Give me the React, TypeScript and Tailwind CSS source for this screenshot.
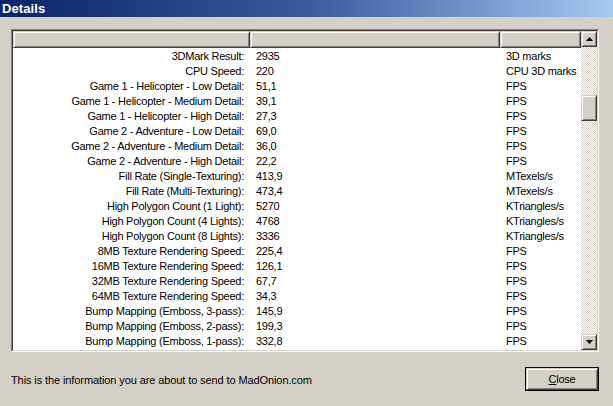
import React from 'react'

const rows: [string, string, string][] = [
  ['3DMark Result:', '2935', '3D marks'],
  ['CPU Speed:', '220', 'CPU 3D marks'],
  ['Game 1 - Helicopter - Low Detail:', '51,1', 'FPS'],
  ['Game 1 - Helicopter - Medium Detail:', '39,1', 'FPS'],
  ['Game 1 - Helicopter - High Detail:', '27,3', 'FPS'],
  ['Game 2 - Adventure - Low Detail:', '69,0', 'FPS'],
  ['Game 2 - Adventure - Medium Detail:', '36,0', 'FPS'],
  ['Game 2 - Adventure - High Detail:', '22,2', 'FPS'],
  ['Fill Rate (Single-Texturing):', '413,9', 'MTexels/s'],
  ['Fill Rate (Multi-Texturing):', '473,4', 'MTexels/s'],
  ['High Polygon Count (1 Light):', '5270', 'KTriangles/s'],
  ['High Polygon Count (4 Lights):', '4768', 'KTriangles/s'],
  ['High Polygon Count (8 Lights):', '3336', 'KTriangles/s'],
  ['8MB Texture Rendering Speed:', '225,4', 'FPS'],
  ['16MB Texture Rendering Speed:', '126,1', 'FPS'],
  ['32MB Texture Rendering Speed:', '67,7', 'FPS'],
  ['64MB Texture Rendering Speed:', '34,3', 'FPS'],
  ['Bump Mapping (Emboss, 3-pass):', '145,9', 'FPS'],
  ['Bump Mapping (Emboss, 2-pass):', '199,3', 'FPS'],
  ['Bump Mapping (Emboss, 1-pass):', '332,8', 'FPS'],
]

// classic raised 3d edge
const raised =
  'border border-t-[#d4d0c8] border-l-[#d4d0c8] border-r-[#404040] border-b-[#404040] shadow-[inset_1px_1px_#ffffff,inset_-1px_-1px_#808080]'

function Arrow({ up }: { up?: boolean }) {
  return (
    <svg width="7" height="4" viewBox="0 0 7 4">
      {up ? <path d="M3.5 0 L7 4 L0 4 Z" fill="#000" /> : <path d="M0 0 L7 0 L3.5 4 Z" fill="#000" />}
    </svg>
  )
}

function HeaderCell({ className }: { className: string }) {
  return <div className={`h-[17px] shrink-0 bg-[#d4d0c8] ${raised} ${className}`} />
}

export default function App() {
  return (
    <div className="w-[613px] h-[406px] bg-[#d4d0c8] flex flex-col overflow-hidden font-['Liberation_Sans',Arial,sans-serif] text-[11px] tracking-[-0.25px] text-black">
      {/* title bar */}
      <div className="h-[17px] shrink-0 flex items-center pl-[2px] bg-gradient-to-r from-[#0a246a] via-[#3a5a9c] to-[#a6caf0]">
        <span className="text-white font-bold text-[13px] leading-none tracking-[0.1px]">Details</span>
      </div>

      {/* list view */}
      <div className="mt-[12px] ml-[11px] mr-[14px] h-[323px] border border-t-[#808080] border-l-[#808080] border-r-white border-b-white">
        <div className="h-full flex border border-t-[#404040] border-l-[#404040] border-r-[#d4d0c8] border-b-[#d4d0c8] bg-white">
          <div className="flex-1 flex flex-col overflow-hidden">
            <div className="flex">
              <HeaderCell className="w-[237px]" />
              <HeaderCell className="w-[250px]" />
              <HeaderCell className="flex-1" />
            </div>
            <div className="flex flex-col pt-[1px]">
              {rows.map(([label, value, unit]) => (
                <div key={label} className="flex h-[15px] items-center leading-none shrink-0">
                  <div className="w-[237px] text-right pr-[6px] whitespace-nowrap">{label}</div>
                  <div className="w-[250px] pl-[6px]">{value}</div>
                  <div className="flex-1 pl-[6px] whitespace-nowrap">{unit}</div>
                </div>
              ))}
            </div>
          </div>

          {/* scrollbar */}
          <div className="w-[16px] shrink-0 flex flex-col bg-[repeating-conic-gradient(#ffffff_0_25%,#d4d0c8_0_50%)] bg-[length:2px_2px]">
            <div className={`h-[16px] shrink-0 bg-[#d4d0c8] flex items-center justify-center ${raised}`}>
              <Arrow up />
            </div>
            <div className="h-[48px] shrink-0" />
            <div className={`h-[26px] shrink-0 bg-[#d4d0c8] ${raised}`} />
            <div className="flex-1" />
            <div className={`h-[16px] shrink-0 bg-[#d4d0c8] flex items-center justify-center ${raised}`}>
              <Arrow />
            </div>
          </div>
        </div>
      </div>

      {/* footer */}
      <div className="flex items-center justify-between ml-[11px] mr-[14px] mt-[15px]">
        <span className="mt-[3px] tracking-[-0.1px]">This is the information you are about to send to MadOnion.com</span>
        <button className="w-[74px] h-[24px] border border-black bg-[#d4d0c8] p-0">
          <div className={`w-full h-full flex items-center justify-center ${raised}`}>
            <span>
              <span className="underline">C</span>lose
            </span>
          </div>
        </button>
      </div>
    </div>
  )
}
